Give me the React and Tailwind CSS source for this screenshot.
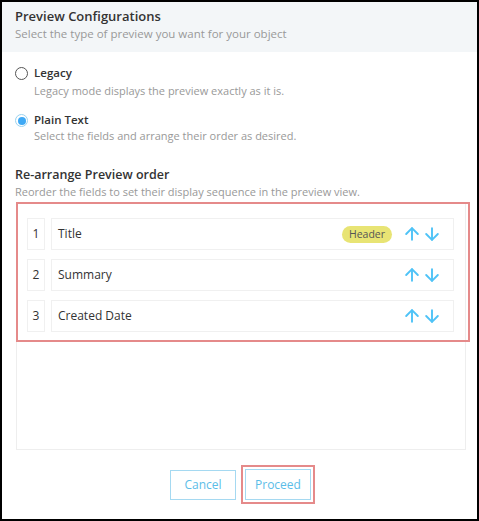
import { ArrowUp, ArrowDown } from "lucide-react";

const fields = [
  { id: 1, name: "Title", header: true },
  { id: 2, name: "Summary" },
  { id: 3, name: "Created Date" },
];

function Radio({ checked }) {
  return (
    <span className={`mt-[1px] flex h-[13px] w-[13px] shrink-0 items-center justify-center rounded-full border ${checked ? "border-[#9bd3f0]" : "border-[#555]"}`}>
      {checked && <span className="h-[8px] w-[8px] rounded-full bg-[#3fa9f5]" />}
    </span>
  );
}

export default function App() {
  return (
    <div className="h-[521px] w-[479px] border-2 border-black bg-white text-[#333]" style={{ fontFamily: "'Open Sans', sans-serif" }}>
      <div className="bg-[#f3f6f8] px-[13px] pb-[10px] pt-[5px]">
        <h2 className="text-[13px] font-semibold leading-[18px]">Preview Configurations</h2>
        <p className="mt-[1px] text-[11.5px] leading-[16px] text-[#999]">Select the type of preview you want for your object</p>
      </div>

      <div className="px-[13px] pt-[14px]">
        <label className="flex gap-[6px]">
          <Radio />
          <span>
            <span className="block text-[11.5px] font-semibold leading-[14px]">Legacy</span>
            <span className="mt-[4px] block text-[11px] leading-[14px] text-[#999]">Legacy mode displays the preview exactly as it is.</span>
          </span>
        </label>
        <label className="mt-[15px] flex gap-[6px]">
          <Radio checked />
          <span>
            <span className="block text-[11.5px] font-semibold leading-[14px]">Plain Text</span>
            <span className="mt-[2px] block text-[11px] leading-[14px] text-[#999]">Select the fields and arrange their order as desired.</span>
          </span>
        </label>

        <h3 className="mt-[24px] text-[12.5px] font-semibold leading-[16px]">Re-arrange Preview order</h3>
        <p className="mt-[2px] text-[11px] leading-[14px] text-[#999]">Reorder the fields to set their display sequence in the preview view.</p>

        <div className="mt-[3px] ml-[1px] h-[248px] w-[450px] border border-[#eee]">
          <div className="-m-[1px] mr-[-5px] flex flex-col gap-[9px] border-2 border-[#e58a8a] pb-[8px] pl-[9px] pr-[14px] pt-[14px]">
            {fields.map((f) => (
              <div key={f.id} className="flex gap-[6px]">
                <span className="flex h-[32px] w-[18px] items-center justify-center border border-[#f0f0f0] text-[12px]">{f.id}</span>
                <div className="flex h-[32px] flex-1 items-center border border-[#f0f0f0] pl-[6px] pr-[11px]">
                  <span className="flex-1 text-[12px]">{f.name}</span>
                  {f.header && (
                    <span className="mr-[10px] rounded-full bg-[#e8e474] px-[7px] text-[10.5px] leading-[17px] text-[#555]">Header</span>
                  )}
                  <ArrowUp className="h-[20px] w-[20px] text-[#4fc3f7]" strokeWidth={2.3} />
                  <ArrowDown className="h-[20px] w-[20px] text-[#4fc3f7]" strokeWidth={2.3} />
                </div>
              </div>
            ))}
          </div>
        </div>

        <div className="mt-[15px] flex items-center justify-center gap-[5px] pl-[6px]">
          <button className="h-[30px] w-[66px] border border-[#a5d9f1] text-[12px] text-[#5bbde8]">Cancel</button>
          <div className="border-2 border-[#e58a8a] p-[2px]">
            <button className="block h-[31px] w-[66px] border border-[#a5d9f1] text-[12px] text-[#5bbde8]">Proceed</button>
          </div>
        </div>
      </div>
    </div>
  );
}
